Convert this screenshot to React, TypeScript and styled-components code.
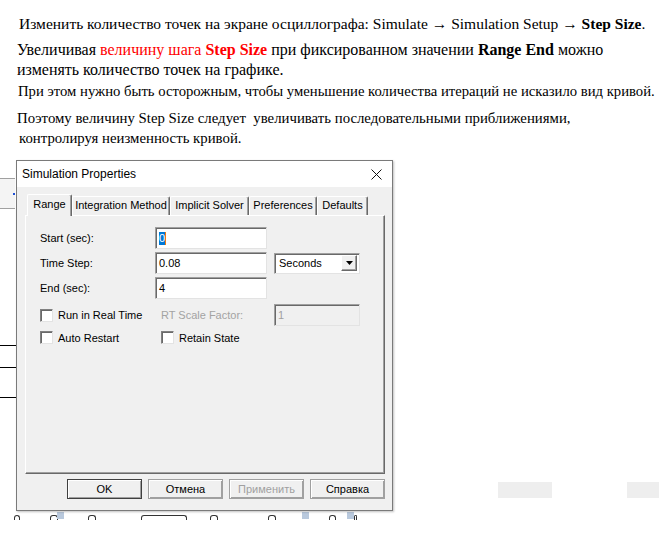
import React from "react";
import styled, { createGlobalStyle } from "styled-components";

const GlobalStyle = createGlobalStyle`
  html, body {
    margin: 0;
    padding: 0;
    background: #ffffff;
  }
  body {
    width: 659px;
    height: 533px;
    overflow: hidden;
  }
`;

const tabs = [
    { label: "Range", width: 45 },
    { label: "Integration Method", width: 98 },
    { label: "Implicit Solver", width: 79 },
    { label: "Preferences", width: 68 },
    { label: "Defaults", width: 51 },
];

const buttons = [
    { label: "OK", primary: true },
    { label: "Отмена" },
    { label: "Применить", disabled: true },
    { label: "Справка" },
];

// фон за диалогом: верхушки подписей графика, обрезанные краем
const axisMarks = [
    { x: 14, w: 4 },
    { x: 50, w: 6 },
    { x: 88, w: 6 },
    { x: 141, w: 44 },
    { x: 210, w: 6 },
    { x: 268, w: 6 },
    { x: 329, w: 5 },
    { x: 354, w: 1 },
];

export default function App() {
    return (
        <>
            <GlobalStyle />
            <Doc>
                <Para $after={6} $indent={2} $size={15.5}>
                    Изменить количество точек на экране осциллографа: Simulate → Simulation Setup → <b>Step Size</b>.
                </Para>
                <Para $after={1} $size={16}>
                    Увеличивая <Red>величину шага</Red> <Red $bold>Step Size</Red> при фиксированном значении{" "}
                    <b>Range End</b> можно
                    <br />
                    изменять количество точек на графике.
                </Para>
                <Para $after={7} $indent={1} $size={14.7}>
                    При этом нужно быть осторожным, чтобы уменьшение количества итераций не исказило вид кривой.
                </Para>
                <Para $after={0} $size={14.8}>
                    Поэтому величину Step Size следует{"\u00a0"} увеличивать последовательными приближениями,
                    <br />
                    <Indent>контролируя неизменность кривой.</Indent>
                </Para>
            </Doc>

            <Scene>
                <SideToolbar>
                    <ToolbarDot />
                </SideToolbar>
                <Tick style={{ top: 197 }} />
                <Tick style={{ top: 219 }} />
                <Tick style={{ top: 249 }} />
                <AxisStrip>
                    {axisMarks.map((m, i) => (
                        <AxisMark key={i} style={{ left: m.x, width: m.w }} />
                    ))}
                    <AxisSquare style={{ left: 57 }} />
                    <AxisSquare style={{ left: 302 }} />
                    <AxisSquare style={{ left: 347 }} />
                </AxisStrip>
                <GhostBlock style={{ left: 498, width: 54 }} />
                <GhostBlock style={{ left: 627, width: 32 }} />

                <Dialog>
                    <TitleBar>
                        <TitleText>Simulation Properties</TitleText>
                        <CloseButton>
                            <svg width="11" height="11" viewBox="0 0 11 11">
                                <path d="M0.5 0.5 L10.5 10.5 M10.5 0.5 L0.5 10.5" stroke="#111" strokeWidth="1" fill="none" />
                            </svg>
                        </CloseButton>
                    </TitleBar>

                    <DialogBody>
                        <TabStrip>
                            {tabs.map((t, i) => (
                                <Tab key={t.label} $width={t.width} $active={i === 0}>
                                    {t.label}
                                </Tab>
                            ))}
                        </TabStrip>

                        <Panel>
                            <FieldGrid>
                                <FieldLabel>Start (sec):</FieldLabel>
                                <TextBox>
                                    <Selected>0</Selected>
                                    <Caret />
                                </TextBox>
                                <span />

                                <FieldLabel>Time Step:</FieldLabel>
                                <TextBox>0.08</TextBox>
                                <Combo>
                                    <ComboText>Seconds</ComboText>
                                    <ComboArrow>
                                        <svg width="7" height="4" viewBox="0 0 7 4">
                                            <path d="M0 0 H7 L3.5 4 Z" fill="#000" />
                                        </svg>
                                    </ComboArrow>
                                </Combo>

                                <FieldLabel>End (sec):</FieldLabel>
                                <TextBox>4</TextBox>
                                <span />
                            </FieldGrid>

                            <OptionGrid>
                                <Option>
                                    <CheckBox />
                                    <span>Run in Real Time</span>
                                </Option>
                                <FieldLabel $disabled>RT Scale Factor:</FieldLabel>
                                <TextBox $disabled>1</TextBox>

                                <Option>
                                    <CheckBox />
                                    <span>Auto Restart</span>
                                </Option>
                                <Option>
                                    <CheckBox />
                                    <span>Retain State</span>
                                </Option>
                                <span />
                            </OptionGrid>
                        </Panel>

                        <ButtonRow>
                            {buttons.map((b) => (
                                <PushButton key={b.label} $primary={b.primary} $disabled={b.disabled}>
                                    {b.label}
                                </PushButton>
                            ))}
                        </ButtonRow>
                    </DialogBody>
                </Dialog>
            </Scene>
        </>
    );
}

/**
 * текст документа
 */
const Doc = styled.div`
    padding: 14px 0 0 17px;
    height: 134px;
    font-family: "Liberation Serif", "Times New Roman", serif;
    line-height: 20px;
    color: #000;
    white-space: nowrap;
`;
const Para = styled.p<{ $after: number; $indent?: number; $size: number }>`
    margin: 0 0 ${({ $after }) => $after}px;
    padding-left: ${({ $indent }) => $indent ?? 0}px;
    font-size: ${({ $size }) => $size}px;
`;
const Red = styled.span<{ $bold?: boolean }>`
    color: #ff0000;
    font-weight: ${({ $bold }) => ($bold ? 700 : 400)};
`;
const Indent = styled.span`
    padding-left: 2px;
`;

/**
 * фон и диалог
 */
const Scene = styled.div`
    position: relative;
    padding-top: 12px;
    height: 373px;
`;
const SideToolbar = styled.div`
    position: absolute;
    left: 0;
    top: 30px;
    width: 15px;
    height: 29px;
    border-top: 1px solid #a0a0a0;
    border-bottom: 1px solid #a0a0a0;
    background: #f4f4f4;
`;
const ToolbarDot = styled.div`
    position: absolute;
    left: 13px;
    top: 14px;
    width: 2px;
    height: 2px;
    background: #1d4fd6;
`;
const Tick = styled.div`
    position: absolute;
    left: 0;
    width: 16px;
    height: 1px;
    background: #000;
`;
const AxisStrip = styled.div`
    position: absolute;
    left: 0;
    top: 364px;
    width: 400px;
    height: 7px;
`;
const AxisMark = styled.div`
    position: absolute;
    top: 3px;
    height: 4px;
    border-top: 1px solid #333;
    border-left: 1px solid #333;
    border-right: 1px solid #333;
    border-radius: 3px 3px 0 0;
`;
const AxisSquare = styled.div`
    position: absolute;
    top: 0;
    width: 7px;
    height: 7px;
    background: #b9c9dd;
`;
const GhostBlock = styled.div`
    position: absolute;
    top: 334px;
    height: 16px;
    background: #eeeeee;
`;

const Dialog = styled.div`
    position: relative;
    box-sizing: border-box;
    margin-left: 16px;
    width: 377px;
    height: 351px;
    border: 1px solid #7a7a7a;
    background: #f0f0f0;
    box-shadow: 1px 1px 2px rgba(0, 0, 0, 0.25);
    font-family: "Liberation Sans", Arial, sans-serif;
    font-size: 11px;
    color: #000;
    display: flex;
    flex-direction: column;
`;
const TitleBar = styled.div`
    height: 26px;
    background: #ffffff;
    display: flex;
    align-items: center;
    justify-content: space-between;
    padding: 0 10px 0 5px;
`;
const TitleText = styled.span`
    font-size: 12px;
    color: #000;
`;
const CloseButton = styled.div`
    display: flex;
    align-items: center;
    padding-top: 1px;
`;
const DialogBody = styled.div`
    flex: 1;
    display: flex;
    flex-direction: column;
    padding: 7px 6px 0 8px;
`;
const TabStrip = styled.div`
    height: 21px;
    display: flex;
    align-items: flex-end;
    padding-left: 2px;
`;
const Tab = styled.div<{ $width: number; $active?: boolean }>`
    position: relative;
    z-index: ${({ $active }) => ($active ? 2 : 1)};
    box-sizing: border-box;
    width: ${({ $width }) => $width}px;
    height: ${({ $active }) => ($active ? 22 : 19)}px;
    margin-bottom: ${({ $active }) => ($active ? -1 : 0)}px;
    padding-top: ${({ $active }) => ($active ? 3 : 2)}px;
    background: #f0f0f0;
    border-top: 1px solid #ffffff;
    border-left: 1px solid #ffffff;
    border-right: 1px solid #696969;
    border-radius: 2px 2px 0 0;
    box-shadow: inset -1px 0 0 #a0a0a0;
    text-align: center;
    white-space: nowrap;
`;
const Panel = styled.div`
    box-sizing: border-box;
    width: 360px;
    height: 259px;
    padding: 11px 0 0 14px;
    border-top: 1px solid #ffffff;
    border-left: 1px solid #ffffff;
    border-right: 1px solid #696969;
    border-bottom: 1px solid #696969;
    box-shadow: inset -1px -1px 0 #a0a0a0;
`;
const FieldGrid = styled.div`
    display: grid;
    grid-template-columns: 108px 112px 86px;
    grid-auto-rows: 22px;
    column-gap: 7px;
    row-gap: 3px;
    align-items: center;
`;
const FieldLabel = styled.span<{ $disabled?: boolean }>`
    color: ${({ $disabled }) => ($disabled ? "#a3a3a3" : "#000")};
    white-space: nowrap;
`;
const TextBox = styled.div<{ $disabled?: boolean }>`
    box-sizing: border-box;
    height: 22px;
    display: flex;
    align-items: center;
    padding-left: 3px;
    background: ${({ $disabled }) => ($disabled ? "#f0f0f0" : "#ffffff")};
    color: ${({ $disabled }) => ($disabled ? "#a0a0a0" : "#000")};
    border: 1px solid;
    border-color: #a0a0a0 #e3e3e3 #e3e3e3 #a0a0a0;
    box-shadow: inset 1px 1px 0 #696969;
`;
const Selected = styled.span`
    background: #0078d7;
    color: #ffffff;
    line-height: 13px;
`;
const Caret = styled.span`
    width: 1px;
    height: 13px;
    background: #f07a10;
`;
const Combo = styled.div`
    box-sizing: border-box;
    height: 21px;
    display: flex;
    align-items: center;
    background: #ffffff;
    border: 1px solid;
    border-color: #a0a0a0 #e3e3e3 #e3e3e3 #a0a0a0;
    box-shadow: inset 1px 1px 0 #696969;
    padding: 2px 2px 2px 4px;
`;
const ComboText = styled.span`
    flex: 1;
`;
const ComboArrow = styled.div`
    box-sizing: border-box;
    width: 16px;
    height: 16px;
    display: flex;
    align-items: center;
    justify-content: center;
    background: #f0f0f0;
    border: 1px solid;
    border-color: #ffffff #696969 #696969 #ffffff;
    box-shadow: inset -1px -1px 0 #a0a0a0;
`;
const OptionGrid = styled.div`
    margin-top: 5px;
    display: grid;
    grid-template-columns: 121px 113px 86px;
    grid-template-rows: 22px 23px;
    align-items: center;
`;
const Option = styled.label`
    display: flex;
    align-items: center;
    gap: 5px;
    white-space: nowrap;
`;
const CheckBox = styled.span`
    box-sizing: border-box;
    width: 13px;
    height: 13px;
    background: #ffffff;
    border: 1px solid;
    border-color: #808080 #e3e3e3 #e3e3e3 #808080;
    box-shadow: inset 1px 1px 0 #696969;
`;
const ButtonRow = styled.div`
    margin-top: 5px;
    width: 360px;
    display: flex;
    justify-content: flex-end;
    gap: 6px;
`;
const PushButton = styled.div<{ $primary?: boolean; $disabled?: boolean }>`
    box-sizing: border-box;
    width: 75px;
    height: 20px;
    display: flex;
    align-items: center;
    justify-content: center;
    background: #f0f0f0;
    color: ${({ $disabled }) => ($disabled ? "#a0a0a0" : "#000")};
    border: 1px solid ${({ $primary }) => ($primary ? "#404040" : "#a0a0a0")};
    box-shadow: inset 1px 1px 0 #ffffff, inset -1px -1px 0 #a0a0a0;
`;
